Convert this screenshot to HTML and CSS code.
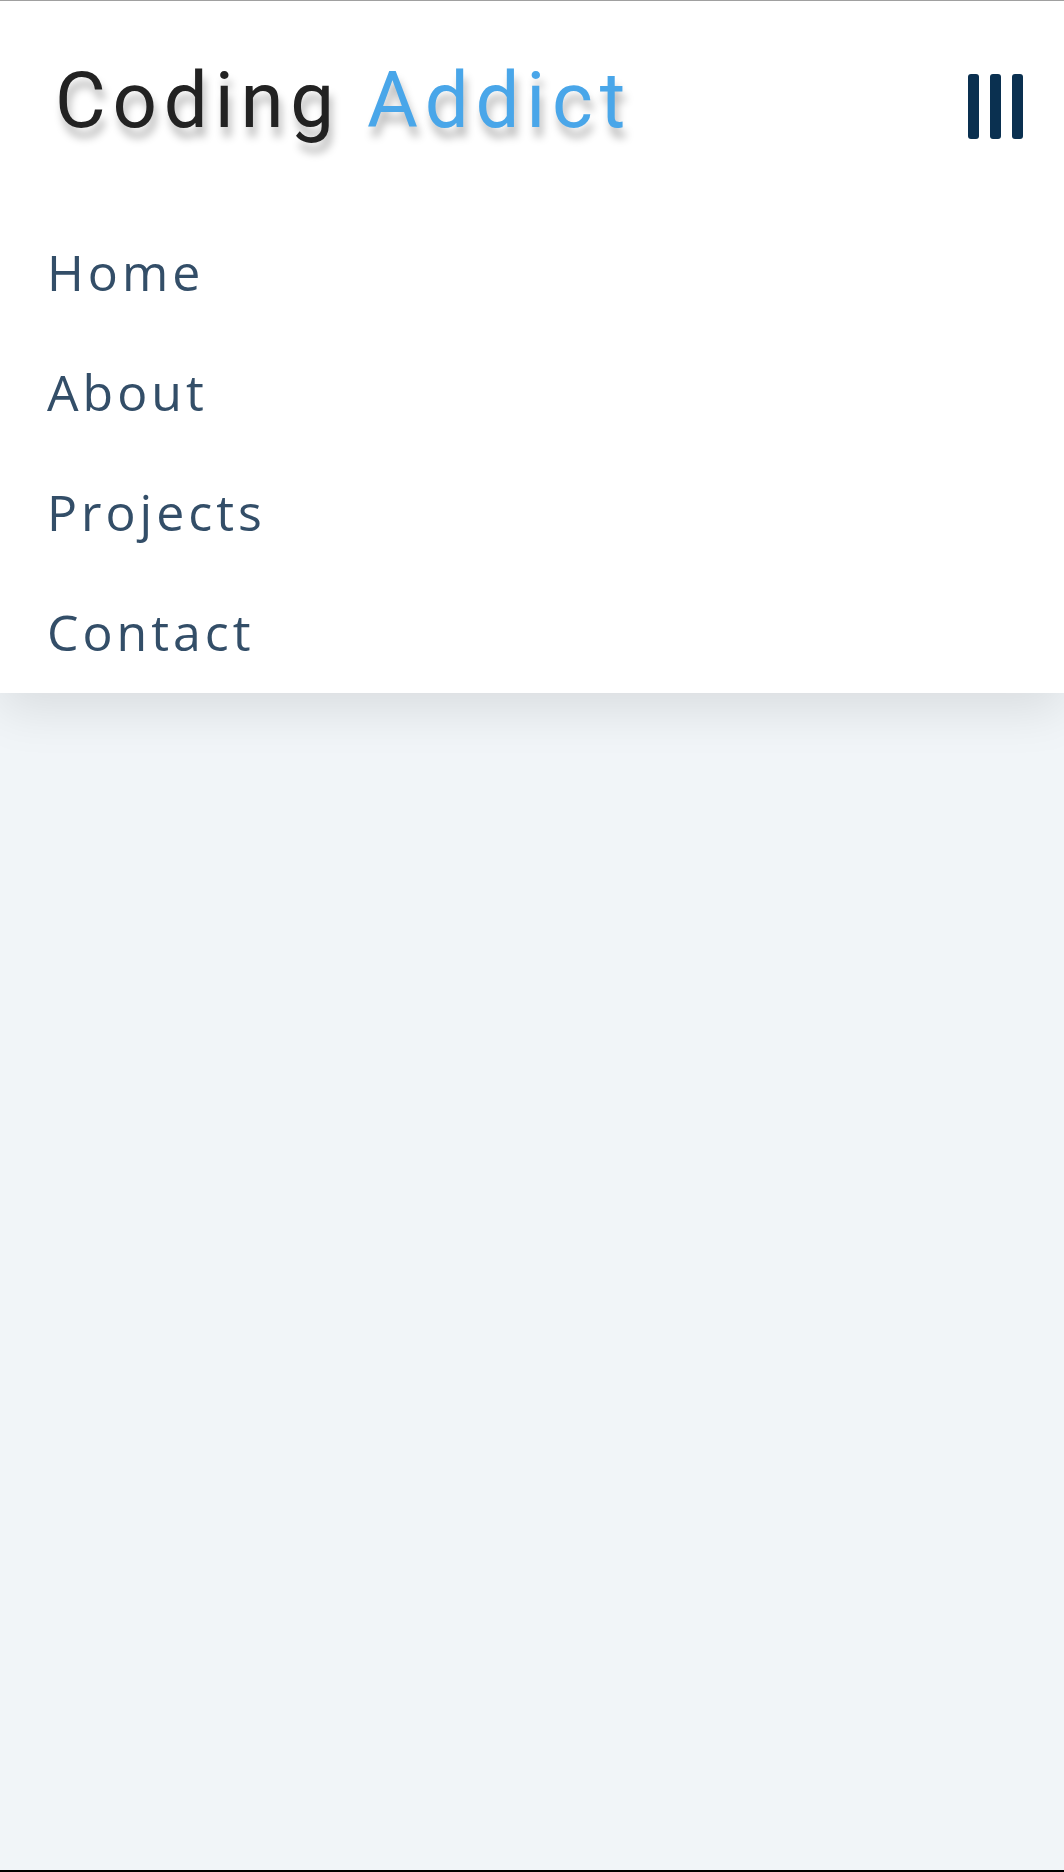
FILE: index.html
```html
<!DOCTYPE html>
<html lang="en">
<head>
<meta charset="utf-8">
<title>Coding Addict</title>
<link rel="stylesheet" href="styles.css">
</head>
<body>
<nav class="nav">
  <div class="nav-header">
    <h1 class="logo">Coding <span class="logo-accent">Addict</span></h1>
    <button class="nav-toggle" aria-label="toggle menu">
      <span class="bar"></span><span class="bar"></span><span class="bar"></span>
    </button>
  </div>
  <ul class="links">
    <li><a href="#" class="link">Home</a></li>
    <li><a href="#" class="link">About</a></li>
    <li><a href="#" class="link">Projects</a></li>
    <li><a href="#" class="link">Contact</a></li>
  </ul>
</nav>
</body>
</html>
```

FILE: styles.css
```css
* { box-sizing: border-box; }
html, body { height: 100%; }
body {
  margin: 0;
  min-height: 100vh;
  background: #f1f5f8;
  border-top: 1px solid #a0a0a0;
  border-bottom: 2px solid #000;
  font-family: "Open Sans", sans-serif;
}
.nav {
  background: #fff;
  box-shadow: 0 16px 48px rgba(0, 0, 0, 0.1);
}
.nav-header {
  height: 211px;
  display: flex;
  align-items: center;
  justify-content: space-between;
  padding: 0 41px 0 55px;
}
.logo {
  margin: 0 0 12px 0;
  font-family: Roboto, sans-serif;
  font-weight: 400;
  font-size: 78px;
  line-height: normal;
  letter-spacing: 6.8px;
  color: #222;
  text-shadow: 3px 10px 8px rgba(0, 0, 0, 0.28);
}
.logo-accent { color: #49a6e9; }
.nav-toggle {
  display: flex;
  gap: 11px;
  padding: 0;
  border: 0;
  background: transparent;
}
.bar {
  width: 11px;
  height: 65px;
  border-radius: 3px;
  background: #0a3050;
}
.links {
  list-style: none;
  margin: 0;
  padding: 0 0 1px 0;
}
.link {
  display: block;
  padding: 22.5px 47px;
  font-size: 50px;
  line-height: 75px;
  letter-spacing: 4px;
  color: #334e68;
  text-decoration: none;
}
```
